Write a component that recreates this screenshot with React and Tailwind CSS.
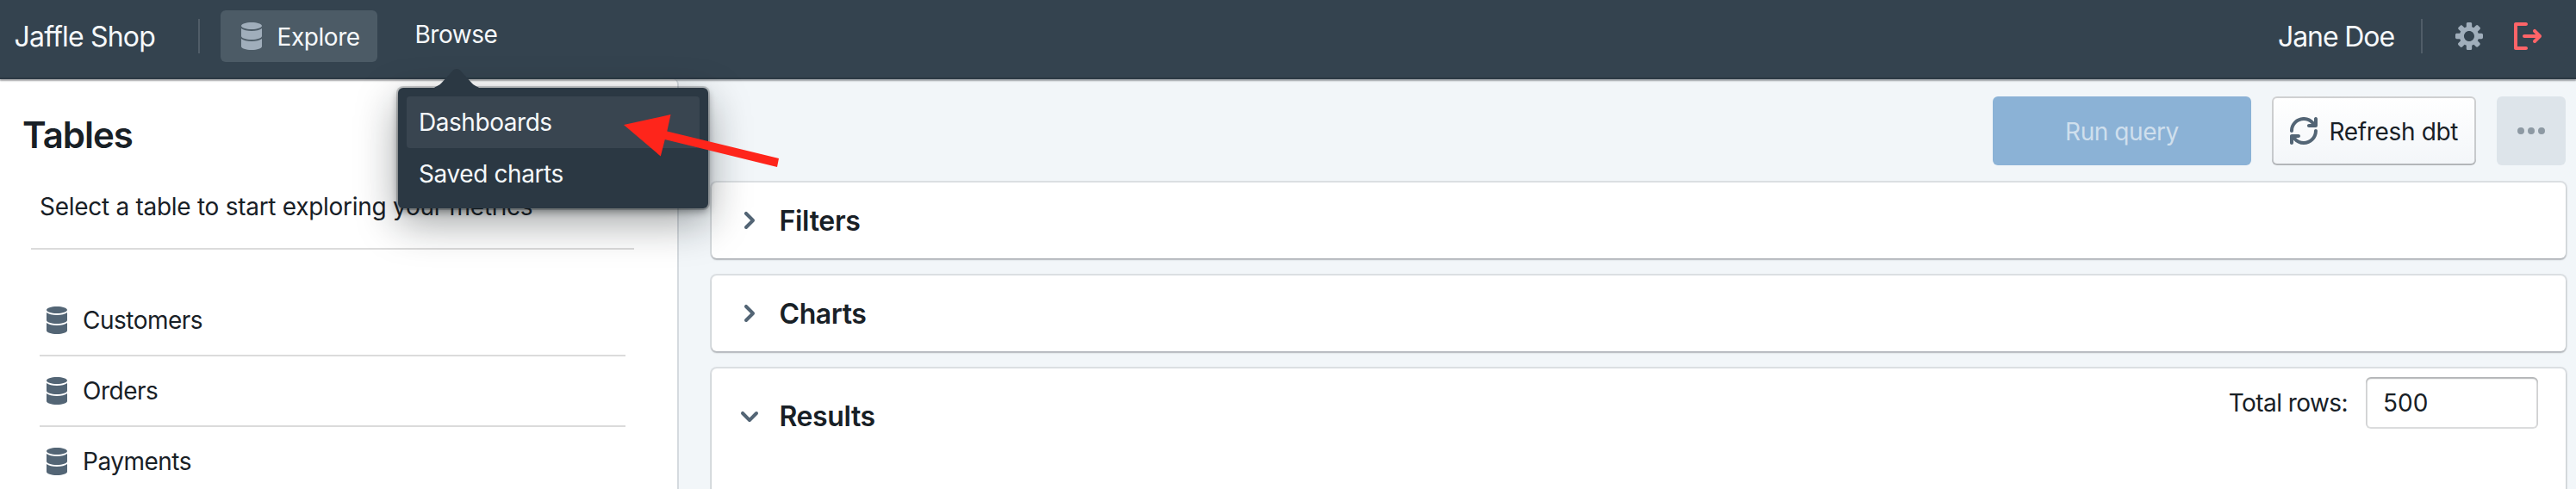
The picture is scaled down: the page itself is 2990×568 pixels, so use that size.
import React from "react";

const PATHS = {
  database:
    "M8 4c3.31 0 6-.9 6-2s-2.69-2-6-2C4.68 0 2 .9 2 2s2.68 2 6 2zm-6-.52V8c0 1.1 2.69 2 6 2s6-.9 6-2V3.48C12.78 4.4 10.59 5 8 5s-4.78-.6-6-1.52zm0 6V14c0 1.1 2.69 2 6 2s6-.9 6-2V9.48C12.78 10.4 10.59 11 8 11s-4.78-.6-6-1.52z",
  cog: "M15.19 6.39h-1.85c-.11-.37-.27-.71-.45-1.04l1.36-1.36c.31-.31.31-.82 0-1.13l-1.13-1.13a.803.803 0 00-1.13 0l-1.36 1.36c-.33-.17-.67-.33-1.04-.44V.79c0-.44-.36-.8-.8-.8h-1.6c-.44 0-.8.36-.8.8v1.86c-.39.12-.75.28-1.1.47l-1.3-1.3c-.3-.3-.79-.3-1.09 0L1.82 2.91c-.3.3-.3.79 0 1.09l1.3 1.3c-.2.34-.36.7-.48 1.09H.79c-.44 0-.8.36-.8.8v1.6c0 .44.36.8.8.8h1.85c.11.37.27.71.45 1.04l-1.36 1.36c-.31.31-.31.82 0 1.13l1.13 1.13c.31.31.82.31 1.13 0l1.36-1.36c.33.18.67.33 1.04.44v1.86c0 .44.36.8.8.8h1.6c.44 0 .8-.36.8-.8v-1.86c.39-.12.75-.28 1.1-.47l1.3 1.3c.3.3.79.3 1.09 0l1.09-1.09c.3-.3.3-.79 0-1.09l-1.3-1.3c.19-.35.36-.71.48-1.1h1.85c.44 0 .8-.36.8-.8v-1.6a.816.816 0 00-.81-.79zM7.99 11c-1.66 0-3-1.34-3-3s1.34-3 3-3 3 1.34 3 3-1.34 3-3 3z",
  logOut:
    "M7 14H2V2h5c.55 0 1-.45 1-1s-.45-1-1-1H1C.45 0 0 .45 0 1v14c0 .55.45 1 1 1h6c.55 0 1-.45 1-1s-.45-1-1-1zm8.71-6.71l-3-3a1.003 1.003 0 00-1.42 1.42L12.59 7H6c-.55 0-1 .45-1 1s.45 1 1 1h6.59l-1.29 1.29c-.19.18-.3.43-.3.71a1.003 1.003 0 001.71.71l3-3c.18-.18.29-.43.29-.71 0-.28-.11-.53-.29-.71z",
  chevronRight:
    "M10.71 7.29l-4-4a1.003 1.003 0 00-1.42 1.42L8.59 8 5.3 11.29c-.19.18-.3.43-.3.71a1.003 1.003 0 001.71.71l4-4c.18-.18.29-.43.29-.71 0-.28-.11-.53-.29-.71z",
  chevronDown:
    "M12 5c-.28 0-.53.11-.71.29L8 8.59l-3.29-3.3a1.003 1.003 0 00-1.42 1.42l4 4c.18.18.43.29.71.29s.53-.11.71-.29l4-4A1.003 1.003 0 0012 5z",
  refresh:
    "M14.99 6.99c-.55 0-1 .45-1 1 0 3.31-2.69 6-6 6-1.77 0-3.36-.78-4.46-2h1.46c.55 0 1-.45 1-1s-.45-1-1-1h-4c-.55 0-1 .45-1 1v4c0 .55.45 1 1 1s1-.45 1-1v-1.74a7.95 7.95 0 006 2.74c4.42 0 8-3.58 8-8 0-.55-.45-1-1-1zm0-7c-.55 0-1 .45-1 1v1.74a7.95 7.95 0 00-6-2.74c-4.42 0-8 3.58-8 8 0 .55.45 1 1 1s1-.45 1-1c0-3.31 2.69-6 6-6 1.77 0 3.36.78 4.46 2h-1.46c-.55 0-1 .45-1 1s.45 1 1 1h4c.55 0 1-.45 1-1v-4c0-.55-.45-1-1-1z",
  more: "M2 6a2 2 0 100 4 2 2 0 000-4zM8 6a2 2 0 100 4 2 2 0 000-4zM14 6a2 2 0 100 4 2 2 0 000-4z",
};

function Icon({ name, className = "" }) {
  return (
    <svg viewBox="0 0 16 16" className={`size-8 shrink-0 ${className}`} fill="currentColor">
      <path fillRule="evenodd" d={PATHS[name]} />
    </svg>
  );
}

function BrowseMenu() {
  return (
    <div className="absolute left-[462px] top-[102px] z-20 h-[140px] w-[360px] rounded-[6px] bg-[#2b3843] p-[10px] shadow-[0_0_0_2px_rgba(16,22,26,0.2),0_4px_8px_rgba(16,22,26,0.4),0_16px_48px_rgba(16,22,26,0.4)]">
      <svg className="absolute left-[38px] top-[-22px] h-6 w-[60px]" viewBox="0 0 30 12">
        <path
          transform="matrix(0 1 1 0 0 0)"
          fill="#2b3843"
          d="M12 2.2H10.7C10.1 3.8 9.3 5.2 8.11 6.302L.925 12.92c-1.233 1.136-1.237 3.03 0 4.17L8.11 23.7C9.3 24.8 10.1 26.2 10.7 27.8H12z"
        />
      </svg>
      <div className="relative flex h-[60px] items-center rounded-[4px] bg-[#394550] pl-[14px] tracking-[-0.45px]">
        Dashboards
      </div>
      <div className="flex h-[60px] items-center pl-[14px] tracking-[-0.4px]">Saved charts</div>
    </div>
  );
}

function Pointer() {
  return (
    <svg className="absolute left-[720px] top-[128px] z-30 h-[70px] w-[188px]" viewBox="720 128 188 70">
      <path
        fill="#fe251b"
        d="M724 145L778.5 133L774.3 152.5L904 184L902 194L771.8 162L766.8 181.5Z"
      />
    </svg>
  );
}

function Navbar() {
  return (
    <header className="relative z-10 flex h-[92px] shrink-0 items-start bg-[#34434f] text-[#f5f8fa] shadow-[inset_0_-2px_0_rgba(16,22,26,0.2),0_0_0_2px_rgba(16,22,26,0.1),0_2px_2px_rgba(16,22,26,0.3)]">
      <div className="ml-[16.5px] mt-[23px] w-[213px] text-[32px] leading-[40px] tracking-[-0.8px]">
        Jaffle Shop
      </div>
      <div className="mt-[22px] h-10 w-[2px] bg-[#505d68]" />
      <div className="ml-[24.5px] mt-3 flex h-[60px] w-[182px] items-center rounded-[6px] bg-[#4c5b66] pl-5">
        <Icon name="database" className="text-[#a0aebb]" />
        <span className="ml-[13.5px] pt-[2px] leading-[36px] tracking-[-0.43px]">Explore</span>
      </div>
      <div className="ml-[43.5px] mt-[22px] leading-[36px] tracking-[-0.45px]">Browse</div>
      <div className="ml-auto mt-[23px] text-[32px] leading-[40px] tracking-[-1.1px]">Jane Doe</div>
      <div className="ml-[31px] mt-[22px] h-10 w-[2px] bg-[#505d68]" />
      <Icon name="cog" className="ml-[38px] mt-[26px] text-[#a0aebb]" />
      <Icon name="logOut" className="ml-9 mr-10 mt-[26px] text-[#ff6468]" />
      <BrowseMenu />
      <Pointer />
    </header>
  );
}

function TableRow({ label }) {
  return (
    <li className="flex h-[82px] items-center border-b-2 border-[#dbdbdb] pl-1">
      <Icon name="database" className="text-[#536575]" />
      <span className="ml-[14px] tracking-[-0.5px]">{label}</span>
    </li>
  );
}

function Sidebar() {
  return (
    <aside className="flex w-[788px] shrink-0 flex-col rounded-tr-[6px] border-r-2 border-[#d5dadf] bg-white">
      <h1 className="ml-[26px] mt-10 text-[42px] font-semibold leading-[50px] tracking-[-1px]">Tables</h1>
      <p className="ml-[46px] mt-[40px] leading-[36px] tracking-[-0.28px]">
        Select a table to start exploring your metrics
      </p>
      <div className="ml-9 mt-[30px] h-[2px] w-[700px] shrink-0 bg-[#dbdbdb]" />
      <ul className="ml-[46px] mt-[42px] w-[680px]">
        <TableRow label="Customers" />
        <TableRow label="Orders" />
        <TableRow label="Payments" />
      </ul>
    </aside>
  );
}

const CARD =
  "rounded-[6px] bg-white shadow-[0_0_0_2px_rgba(16,22,26,0.1),0_2px_2px_rgba(16,22,26,0.2)]";

function Panel({ title, tracking }) {
  return (
    <section className={`flex h-[88px] shrink-0 items-center pl-[28px] ${CARD}`}>
      <Icon name="chevronRight" className="text-[#536575]" />
      <h2 className={`ml-[18.5px] pt-px text-[32px] font-semibold leading-[40px] ${tracking}`}>{title}</h2>
    </section>
  );
}

function Toolbar() {
  return (
    <div className="flex h-20 shrink-0 justify-end gap-6">
      <button className="w-[300px] rounded-[6px] bg-[#8bb2d6] pt-[2px] tracking-[-0.44px] text-[#cfdfed]">Run query</button>
      <button className="flex w-[237px] items-center rounded-[6px] bg-linear-to-b from-white to-[#f3f6f9] pl-[21px] shadow-[inset_0_0_0_2px_rgba(16,22,26,0.2),inset_0_-2px_0_rgba(16,22,26,0.1)]">
        <Icon name="refresh" className="text-[#536575]" />
        <span className="ml-[13.5px] pt-[2px] tracking-[-0.34px]">Refresh dbt</span>
      </button>
      <button className="flex w-20 items-center justify-center rounded-[6px] bg-[#dde4ea]">
        <Icon name="more" className="text-[#8d99a3]" />
      </button>
    </div>
  );
}

export default function App() {
  return (
    <div className="flex h-[568px] w-[2990px] flex-col overflow-hidden bg-[#f2f6f9] font-['Inter','Liberation_Sans',sans-serif] text-[28px] leading-[36px] text-[#182026]">
      <Navbar />
      <div className="flex min-h-0 flex-1">
        <Sidebar />
        <main className="flex min-w-0 flex-1 flex-col gap-5 pl-[38px] pr-3 pt-5">
          <Toolbar />
          <Panel title="Filters" tracking="tracking-[-0.3px]" />
          <Panel title="Charts" tracking="tracking-[-0.4px]" />
          <section className={`flex h-[200px] shrink-0 items-start pl-[28px] pr-8 ${CARD}`}>
            <Icon name="chevronDown" className="mt-10 text-[#536575]" />
            <h2 className="ml-[18.5px] mt-9 text-[32px] font-semibold leading-[40px] tracking-[-0.4px]">Results</h2>
            <label className="ml-auto mr-px mt-[22px] tracking-[-0.57px]">Total rows:</label>
            <input
              type="text"
              defaultValue="500"
              className="ml-5 mt-[10px] h-[60px] w-[200px] rounded-[6px] bg-white pl-5 shadow-[inset_0_0_0_2px_rgba(16,22,26,0.15),inset_0_2px_2px_rgba(16,22,26,0.2)] outline-none"
            />
          </section>
        </main>
      </div>
    </div>
  );
}
